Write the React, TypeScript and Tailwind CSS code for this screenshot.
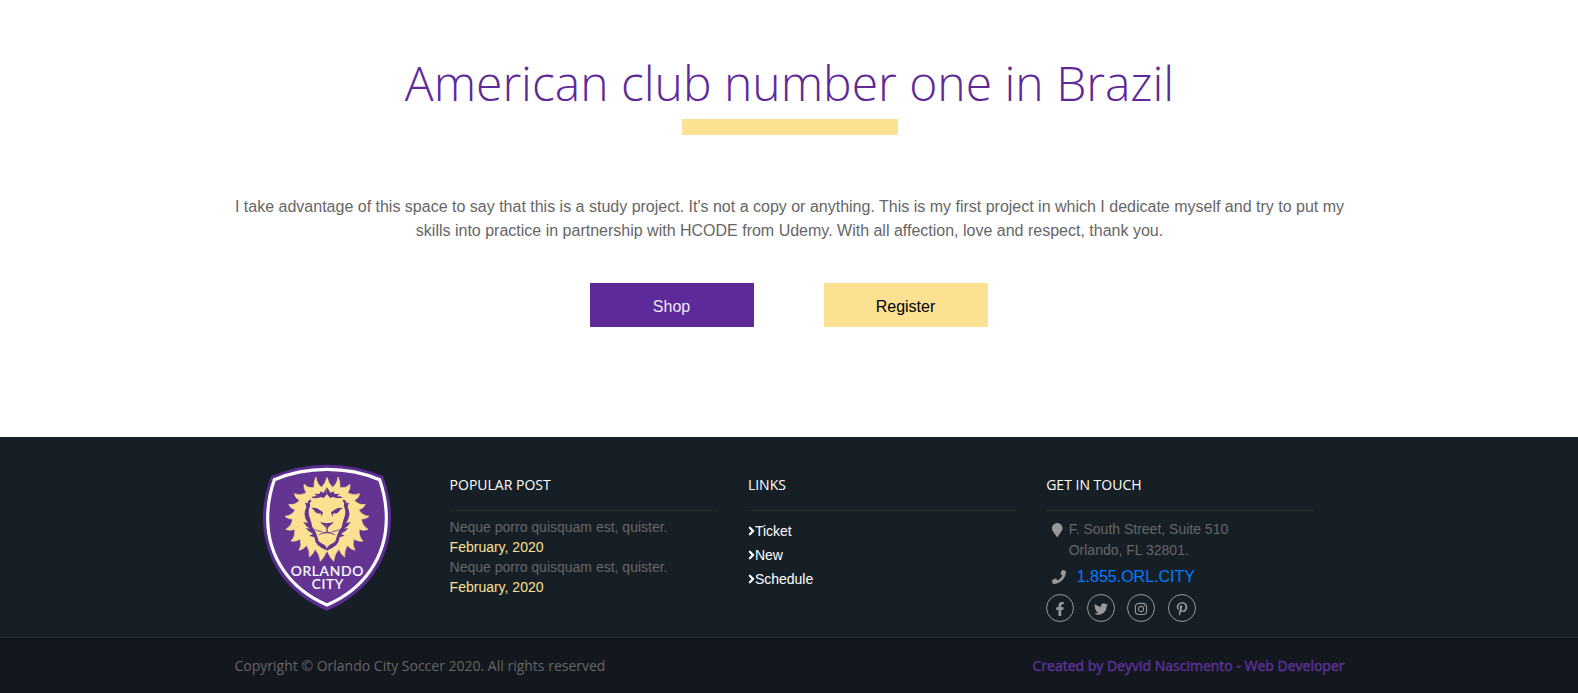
import React from "react";
import {
  FaAngleRight,
  FaFacebookF,
  FaInstagram,
  FaMapMarker,
  FaPhone,
  FaPinterestP,
  FaTwitter,
} from "react-icons/fa";

const maneHalf =
  "M141 17 Q136 34 125 46 Q110 36 108 15 Q101 28 102 47 Q84 50 72 37 Q70 49 79 63 Q60 72 43 65 Q46 79 59 85 Q45 101 26 97 Q32 111 46 113 Q36 131 15 133 Q25 143 38 141 Q36 160 18 172 Q30 178 44 172 Q47 193 33 207 Q47 210 60 201 Q67 218 57 235 Q71 232 80 220 Q90 236 88 255 Q100 247 105 231 Q119 247 121 268 Q132 256 141 236 Z";

function LionHalf() {
  return (
    <g>
      <path d={maneHalf} fill="#fce192" stroke="#fce192" strokeWidth="2" />
      <g fill="#633492">
        <path d="M141.5 45 L130 63 L122 58 L118 66 L103 65 L111 73 Q97 72 94 77 L108 79 L124 75 L131 78 L141.5 66 Z" />
        <path d="M91 82 L94 88 L89 93 Q92 101 88 108 Q84 122 89 136 L94 152 Q94 164 104 174 L108 184 Q113 196 116 208 Q124 216 133 218 L141.5 228 V236 Q124 229 113 219 Q105 211 103 196 L88 191 L99 185 Q85 180 77 168 L90 170 Q76 162 70 150 L84 153 Q75 142 74 130 Q73 118 78 108 Q80 100 74 92 L82 94 L84 88 Z" />
        <path d="M94 108 Q108 105 119 114 L129 121 L125 134 L122 124 Q112 126 106 120 Q102 113 94 108 Z" />
        <path d="M121 150 Q131 154 142 153 V170 Q136 167 131 160 Q125 158 121 150 Z" />
        <path d="M139 168 H142 V184 Q127 183 115 191 Q122 181 139 179 Z" />
        <path d="M101 170 Q115 178 130 177 Q116 184 101 170 Z" />
      </g>
    </g>
  );
}

function Crest() {
  return (
    <svg viewBox="0 0 480 495" className="block h-[165px] w-[160px]" role="img" aria-label="Orlando City">
      <path
        d="M231 29 Q315 29 399 63 Q423 127 423 190 C423 315 350 418 231 467 C112 418 39 315 39 190 Q39 127 63 63 Q147 29 231 29 Z"
        fill="#5c2d91"
      />
      <path
        d="M231 43 Q315 43 389 74 Q409 131 409 190 C409 307 341 403 231 450 C121 403 53 307 53 190 Q53 131 73 74 Q147 43 231 43 Z"
        fill="#633492"
        stroke="#fff"
        strokeWidth="9.5"
      />
      <g transform="translate(90 51)">
        <LionHalf />
        <g transform="translate(282 0) scale(-1 1)">
          <LionHalf />
        </g>
      </g>
      <g fill="#fff" fontFamily="Lato, sans-serif" fontSize="39" letterSpacing="2" stroke="#fff" strokeWidth=".6">
        <text x="122" y="362" textLength="220" lengthAdjust="spacingAndGlyphs">
          ORLANDO
        </text>
        <text x="185" y="401" textLength="97" lengthAdjust="spacingAndGlyphs">
          CITY
        </text>
      </g>
    </svg>
  );
}

function Column({ title, children }: { title: string; children: React.ReactNode }) {
  return (
    <div className="mr-[30px] w-[268.3px] shrink-0">
      <h4 className="h-[74px] border-b border-[#252d24] pt-[37px] font-['Open_Sans',sans-serif] text-sm leading-[21px] text-white">
        {title}
      </h4>
      {children}
    </div>
  );
}

const posts = [1, 2];
const links = ["Ticket", "New", "Schedule"];
const socials = [
  { name: "Facebook", Icon: FaFacebookF },
  { name: "Twitter", Icon: FaTwitter },
  { name: "Instagram", Icon: FaInstagram },
  { name: "Pinterest", Icon: FaPinterestP },
];

export default function App() {
  return (
    <div className="flex h-[693px] flex-col overflow-hidden bg-white font-['Liberation_Sans',sans-serif] text-base text-[#666]">
      <section className="mx-auto flex h-[437px] w-[1110px] shrink-0 flex-col items-center text-center">
        <h1 className="ml-px pt-[54px] font-['Open_Sans',sans-serif] text-[48px] leading-[58px] font-light whitespace-nowrap text-[#5e2a99]">
          American club number one in Brazil
        </h1>
        <div className="mt-[7px] ml-[2px] h-4 w-[216px] bg-[#fce192]" />
        <p className="mt-[60px] ml-px w-[1110px] leading-6">
          I take advantage of this space to say that this is a study project. It's not a copy or anything. This is my
          first project in which I dedicate myself and try to put my skills into practice in partnership with HCODE from
          Udemy. With all affection, love and respect, thank you.
        </p>
        <div className="mt-10 flex gap-[70px]">
          <a href="#" className="h-11 w-[164px] bg-[#5e2a99] pt-px pr-px leading-[46px] text-[#f1e9f8]">
            Shop
          </a>
          <a href="#" className="h-11 w-[164px] bg-[#fce192] pt-px pr-px leading-[46px] text-black">
            Register
          </a>
        </div>
      </section>

      <footer className="flex grow flex-col bg-[#171f26]">
        <div className="mx-auto flex h-[200px] w-[1110px] shrink-0">
          <div className="w-[215.6px] shrink-0 pt-[18px] pl-4">
            <Crest />
          </div>
          <Column title="POPULAR POST">
            <div className="pt-[6px] text-sm leading-5">
              {posts.map((post) => (
                <div key={post}>
                  <p>Neque porro quisquam est, quister.</p>
                  <p className="text-[#fce192]">February, 2020</p>
                </div>
              ))}
            </div>
          </Column>
          <Column title="LINKS">
            <ul className="pt-[8px] text-sm leading-6 text-white">
              {links.map((link) => (
                <li key={link} className="flex items-center">
                  <FaAngleRight className="h-[14px] w-[7px]" preserveAspectRatio="xMidYMid slice" />
                  <a href="#">{link}</a>
                </li>
              ))}
            </ul>
          </Column>
          <Column title="GET IN TOUCH">
            <div className="flex pt-[8px] pl-[6px] text-sm leading-[21px]">
              <FaMapMarker className="mt-[4px] mr-[6px] h-[14px] w-[10.5px] text-[#999]" />
              <p>
                F. South Street, Suite 510
                <br />
                Orlando, FL 32801.
              </p>
            </div>
            <div className="mt-[4px] flex items-center pl-[6px] leading-6">
              <FaPhone className="mr-[10.5px] size-[14px] text-[#999]" />
              <a href="#" className="text-[#007bff]">
                1.855.ORL.CITY
              </a>
            </div>
            <div className="mt-[5px] flex gap-[12.6px]">
              {socials.map(({ name, Icon }) => (
                <a
                  key={name}
                  href="#"
                  aria-label={name}
                  className="flex size-7 items-center justify-center rounded-full border border-[#999] text-sm text-[#999]"
                >
                  <Icon className="mt-px" />
                </a>
              ))}
            </div>
          </Column>
        </div>
        <div className="grow border-t border-[#232f38] bg-[#13171e]">
          <div className="mx-auto flex w-[1110px] justify-between pt-[17px] font-['Open_Sans',sans-serif] text-sm leading-[21px]">
            <p className="ml-[0.5px]">Copyright © Orlando City Soccer 2020. All rights reserved</p>
            <a href="#" className="-mr-[0.5px] text-[#5a3096] [-webkit-text-stroke:0.5px_#5a3096]">
              Created by Deyvid Nascimento - Web Developer
            </a>
          </div>
        </div>
      </footer>
    </div>
  );
}
